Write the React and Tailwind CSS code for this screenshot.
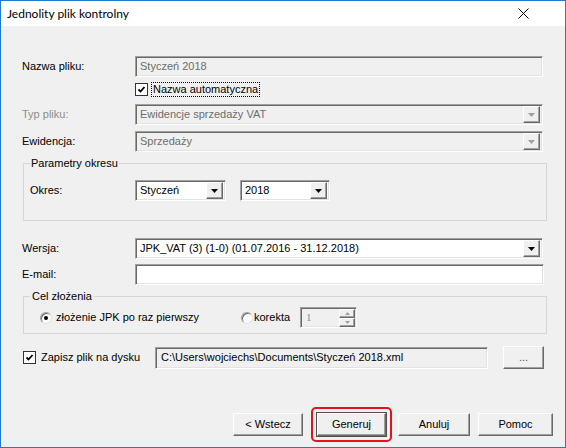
import React from 'react';

const sunken = 'border border-t-[#a0a0a0] border-l-[#a0a0a0] border-r-white border-b-white shadow-[inset_1px_1px_0_#696969,inset_-1px_-1px_0_#e3e3e3]';
const raised = 'border border-t-white border-l-white border-r-[#696969] border-b-[#696969] shadow-[inset_-1px_-1px_0_#a0a0a0,inset_1px_1px_0_#f0f0f0]';

const Arrow = ({ disabled }) => (
  <svg width="7" height="4" viewBox="0 0 7 4">
    <path d="M0 0h7L3.5 4z" fill={disabled ? '#a0a0a0' : '#000'} />
  </svg>
);

const Combo = ({ value, width, disabled }) => (
  <div
    className={`${sunken} h-[21px] flex items-center pl-[4px] pr-[2px] ${disabled ? 'bg-[#f0f0f0] text-[#6d6d6d]' : 'bg-white text-black'}`}
    style={{ width }}
  >
    <span className="flex-1 truncate">{value}</span>
    <div className={`${raised} w-[17px] h-[17px] bg-[#f0f0f0] flex items-center justify-center`}>
      <Arrow disabled={disabled} />
    </div>
  </div>
);

const Check = () => (
  <div className="w-[13px] h-[13px] bg-white border border-[#333] flex items-center justify-center shrink-0">
    <svg width="9" height="9" viewBox="0 0 9 9">
      <path d="M1.5 4.5l2 2L7.5 2" stroke="#000" strokeWidth="1.8" fill="none" />
    </svg>
  </div>
);

const Radio = ({ checked }) => (
  <div className="w-[12px] h-[12px] rounded-full bg-white border border-t-[#a0a0a0] border-l-[#a0a0a0] border-r-[#e3e3e3] border-b-[#e3e3e3] shadow-[inset_1px_1px_0_#696969] flex items-center justify-center shrink-0">
    {checked && <div className="w-[4px] h-[4px] rounded-full bg-black" />}
  </div>
);

const Label = ({ children, gray }) => (
  <div className={`w-[113px] shrink-0 ${gray ? 'text-[#8d8d8d]' : 'text-black'}`}>{children}</div>
);

const Button = ({ children, className = '' }) => (
  <div className={`${raised} h-[23px] bg-[#f0f0f0] flex items-center justify-center ${className}`}>{children}</div>
);

export default function App() {
  return (
    <div
      className="w-[566px] h-[448px] border border-[#1c7ad4] flex flex-col bg-[#f0f0f0] overflow-hidden"
      style={{ fontFamily: '"Liberation Sans", Arial, sans-serif', fontSize: '11px' }}
    >
      {/* title bar */}
      <div className="h-[25px] bg-white flex items-center justify-between pl-[6px] pr-[36px]">
        <span className="text-[12px] text-black" style={{ fontFamily: 'Lato, "Noto Sans", sans-serif' }}>
          Jednolity plik kontrolny
        </span>
        <svg width="11" height="11" viewBox="0 0 11 11">
          <path d="M0.5 0.5l10 10M10.5 0.5l-10 10" stroke="#000" strokeWidth="1" />
        </svg>
      </div>

      {/* body */}
      <div className="flex-1 flex flex-col pl-[21px]">
        <div className="flex items-center mt-[30px]">
          <Label>Nazwa pliku:</Label>
          <div className={`${sunken} w-[408px] h-[21px] bg-[#f0f0f0] text-[#6d6d6d] flex items-center pl-[4px]`}>
            Styczeń 2018
          </div>
        </div>

        <div className="flex items-center mt-[6px] pl-[113px]">
          <Check />
          <span className="ml-[4px] outline outline-1 outline-dotted outline-black px-[1px] leading-[13px]">
            Nazwa automatyczna
          </span>
        </div>

        <div className="flex items-center mt-[8px]">
          <Label gray>Typ pliku:</Label>
          <Combo value="Ewidencje sprzedaży VAT" width={408} disabled />
        </div>

        <div className="flex items-center mt-[6px]">
          <Label>Ewidencja:</Label>
          <Combo value="Sprzedaży" width={408} disabled />
        </div>

        <fieldset className="mt-[4px] w-[524px] ml-[1px] border border-[#d5d5d5] h-[65px] px-[6px]">
          <legend className="px-[1px] leading-[14px]">Parametry okresu</legend>
          <div className="flex items-center mt-[10px]">
            <div className="w-[105px]">Okres:</div>
            <Combo value="Styczeń" width={91} />
            <div className="w-[14px]" />
            <Combo value="2018" width={90} />
          </div>
        </fieldset>

        <div className="flex items-center mt-[17px]">
          <Label>Wersja:</Label>
          <Combo value="JPK_VAT (3) (1-0) (01.07.2016 - 31.12.2018)" width={408} />
        </div>

        <div className="flex items-center mt-[5px]">
          <Label>E-mail:</Label>
          <div className={`${sunken} w-[409px] h-[21px] bg-white`} />
        </div>

        <fieldset className="mt-[4px] w-[524px] ml-[1px] border border-[#d5d5d5] h-[45px] px-[6px]">
          <legend className="px-[2px] leading-[14px]">Cel złożenia</legend>
          <div className="flex items-center mt-[4px] pl-[10px]">
            <Radio checked />
            <span className="ml-[4px] w-[136px] whitespace-nowrap">złożenie JPK po raz pierwszy</span>
            <div className="ml-[49px]">
              <Radio />
            </div>
            <span className="ml-[1px] w-[36px]">korekta</span>
            <div className={`${sunken} ml-[10px] w-[57px] h-[21px] bg-[#f0f0f0] flex items-center pl-[5px] pr-[1px]`}>
              <span className="flex-1 text-[#8d8d8d]" style={{ fontFamily: '"Liberation Serif", serif' }}>1</span>
              <div className="flex flex-col">
                <div className={`${raised} w-[16px] h-[9px] flex items-center justify-center`}>
                  <svg width="5" height="3" viewBox="0 0 5 3"><path d="M0 3h5L2.5 0z" fill="#a0a0a0" /></svg>
                </div>
                <div className={`${raised} w-[16px] h-[9px] flex items-center justify-center`}>
                  <svg width="5" height="3" viewBox="0 0 5 3"><path d="M0 0h5L2.5 3z" fill="#a0a0a0" /></svg>
                </div>
              </div>
            </div>
          </div>
        </fieldset>

        <div className="flex items-center mt-[12px] pl-[1px]">
          <Check />
          <span className="ml-[5px] w-[114px]">Zapisz plik na dysku</span>
          <div className={`${sunken} w-[333px] h-[22px] bg-[#f0f0f0] flex items-center pl-[5px]`}>
            C:\Users\wojciechs\Documents\Styczeń 2018.xml
          </div>
          <Button className="ml-[15px] w-[41px] h-[22px] text-[#555]">...</Button>
        </div>

        <div className="flex items-center mt-[38px] pl-[211px]">
          <Button className="w-[70px]">&lt; Wstecz</Button>
          <div className="ml-[8px] border-2 border-[#e0141e] rounded-[5px] p-[3px]">
            <div className="border border-[#505050]">
              <Button className="w-[69px] h-[21px]">Generuj</Button>
            </div>
          </div>
          <Button className="ml-[6px] w-[72px]">Anuluj</Button>
          <Button className="ml-[8px] w-[75px]">Pomoc</Button>
        </div>
      </div>
    </div>
  );
}
